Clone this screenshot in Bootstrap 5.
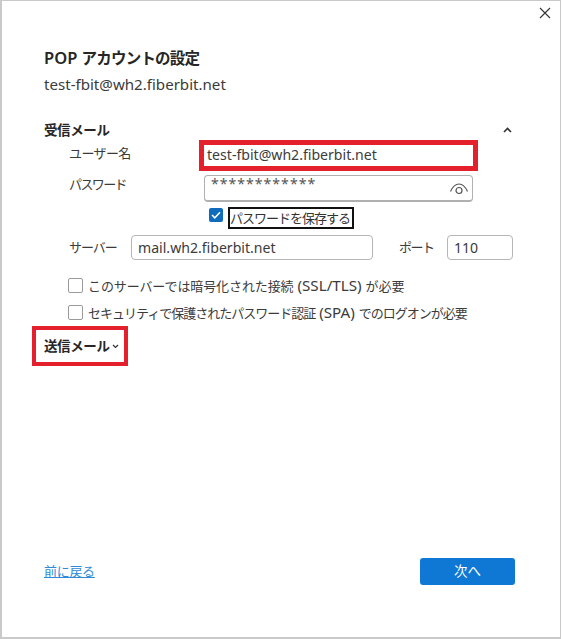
<!DOCTYPE html>
<html lang="ja">
<head>
  <meta charset="UTF-8" />
  <meta name="viewport" content="width=device-width, initial-scale=1" />
  <title>POP アカウントの設定</title>
  <link href="https://cdn.jsdelivr.net/npm/bootstrap@5.3.0/dist/css/bootstrap.min.css" rel="stylesheet" />
  <style>
    html, body { margin: 0; background: #fff; }
    body {
      font-family: "Noto Sans", "Noto Sans CJK JP", sans-serif;
      font-size: 14px;
      color: #3b3b3b;
    }
    .dialog-frame {
      width: 561px;
      height: 639px;
      border: 2px solid #c9c9c9;
      border-right-width: 1px;
      border-top-width: 1px;
      background: #fff;
      padding: 0 0 0 42px;
      display: flex;
      flex-direction: column;
    }
    .close-row { height: 26px; padding-right: 9px; padding-top: 6px; }
    .acct-title { margin: 20px 0 0; height: 22px; line-height: 22px; font-size: 16.5px; font-weight: 600; color: #262626; }
    .acct-title .jp { font-size: 15.5px; letter-spacing: -0.8px; }
    .acct-mail { margin-top: 4px; height: 22px; line-height: 22px; font-size: 15.1px; }
    .section-head { height: 20px; line-height: 20px; font-size: 13.5px; font-weight: 700; color: #262626; letter-spacing: -0.4px; }
    .incoming { margin-top: 25px; padding-right: 48px; }
    .form-line { display: flex; align-items: center; padding-left: 25px; }
    .line-label { font-size: 13px; white-space: nowrap; flex: none; }
    .field-box {
      border: 1px solid #b5b5b5;
      border-radius: 4px;
      background: #fff;
      padding: 0 6px;
      height: 25px;
      line-height: 23px;
      font-size: 14.1px;
      color: #3b3b3b;
      flex: none;
    }
    .user-line { height: 31px; }
    .user-label { width: 130px; letter-spacing: -0.6px; margin-bottom: 4px; }
    .user-field {
      width: 279px;
      height: 31px;
      border: 5px solid #e3202b;
      border-radius: 0;
      line-height: 19px;
      padding: 0 3px;
    }
    .pass-line { margin-top: 4px; height: 27px; }
    .pass-label { width: 135px; letter-spacing: -1.6px; margin-bottom: 7px; }
    .pass-field {
      width: 269px;
      height: 27px;
      border-color: #b0b0b0;
      border-bottom-width: 2px;
      display: flex;
      justify-content: space-between;
      padding-right: 3px;
      color: #555;
      letter-spacing: 1px;
      line-height: 15px;
    }
    .save-line { margin-top: 5px; padding-left: 165px; height: 22px; gap: 5px; align-items: flex-start; }
    .tick-on { width: 14px; height: 14px; margin-top: 1px; background: #0f6cbd; border-radius: 2px; display: flex; align-items: center; justify-content: center; flex: none; }
    .save-text { border: 2px solid #111; height: 22px; line-height: 18px; width: 126px; font-size: 13px; letter-spacing: -1px; white-space: nowrap; color: #333; }
    .server-line { margin-top: 6px; height: 25px; }
    .server-label { width: 62px; letter-spacing: -1px; }
    .server-field { width: 242px; }
    .port-label { margin-left: 26px; width: 48px; letter-spacing: -1.5px; }
    .port-field { width: 66px; }
    .opt-line { gap: 5px; font-size: 15.2px; padding-left: 24px; white-space: nowrap; }
    .opt-first { margin-top: 12px; height: 27px; }
    .opt-second { margin-top: 1px; height: 25px; }
    .opt-line .jp { font-size: 13px; }
    .opt-first .jp { letter-spacing: -0.1px; }
    .opt-first .jp-end { letter-spacing: 0; }
    .opt-second .jp { letter-spacing: -1px; }
    .tick-off { width: 15px; height: 15px; border: 1px solid #9a9a9a; border-radius: 2px; background: #fff; flex: none; }
    .outgoing-box {
      margin-left: -12px;
      margin-top: 1px;
      width: 96px;
      height: 40px;
      border: 4px solid #e3202b;
      padding-left: 8px;
      display: flex;
      align-items: center;
      gap: 2px;
    }
    .dialog-foot { margin-top: auto; margin-bottom: 52px; padding-right: 45px; }
    .back-link { font-size: 13px; letter-spacing: -0.3px; color: #2f8ad8; text-decoration: underline; }
    .next-btn {
      width: 95px;
      height: 27px;
      background: #0f78d4;
      border: none;
      border-radius: 3px;
      color: #fff;
      font-size: 13.5px;
      line-height: 27px;
      padding: 0;
    }
  </style>
</head>
<body>
  <div class="dialog-frame">
    <div class="close-row d-flex justify-content-end">
      <svg width="12" height="12" viewBox="0 0 12 12"><path d="M1 1 11 11M11 1 1 11" stroke="#333" stroke-width="1.1" fill="none"/></svg>
    </div>
    <h1 class="acct-title">POP <span class="jp">アカウントの設定</span></h1>
    <div class="acct-mail">test-fbit@wh2.fiberbit.net</div>

    <div class="incoming d-flex justify-content-between align-items-center section-head">
      <span>受信メール</span>
      <svg width="9" height="6" viewBox="0 0 9 6"><path d="M1 5 4.5 1.5 8 5" stroke="#333" stroke-width="1.6" fill="none"/></svg>
    </div>

    <div class="form-line user-line">
      <span class="line-label user-label">ユーザー名</span>
      <div class="field-box user-field">test-fbit@wh2.fiberbit.net</div>
    </div>
    <div class="form-line pass-line">
      <span class="line-label pass-label">パスワード</span>
      <div class="field-box pass-field">
        <span>************</span>
        <svg class="align-self-center" width="20" height="14" viewBox="0 0 20 14"><path d="M1.5 10.5C4 5 7 3 10 3s6 2 8.5 7.5" stroke="#555" stroke-width="1.2" fill="none"/><circle cx="10" cy="9.5" r="3" stroke="#555" stroke-width="1.2" fill="none"/></svg>
      </div>
    </div>
    <div class="form-line save-line">
      <span class="tick-on">
        <svg width="10" height="8" viewBox="0 0 10 8"><path d="M1 4 3.8 6.8 9 1.2" stroke="#fff" stroke-width="1.5" fill="none"/></svg>
      </span>
      <span class="save-text">パスワードを保存する</span>
    </div>
    <div class="form-line server-line">
      <span class="line-label server-label">サーバー</span>
      <div class="field-box server-field">mail.wh2.fiberbit.net</div>
      <span class="line-label port-label">ポート</span>
      <div class="field-box port-field">110</div>
    </div>
    <div class="form-line opt-line opt-first">
      <span class="tick-off"></span>
      <span><span class="jp">このサーバーでは暗号化された接続</span> (SSL/TLS) <span class="jp jp-end">が必要</span></span>
    </div>
    <div class="form-line opt-line opt-second">
      <span class="tick-off"></span>
      <span><span class="jp">セキュリティで保護されたパスワード認証</span> (SPA) <span class="jp">でのログオンが必要</span></span>
    </div>
    <div class="outgoing-box section-head">
      <span>送信メール</span>
      <svg width="7" height="5" viewBox="0 0 7 5"><path d="M1 1 3.5 3.5 6 1" stroke="#333" stroke-width="1.2" fill="none"/></svg>
    </div>

    <div class="dialog-foot d-flex justify-content-between align-items-center">
      <a href="#" class="back-link">前に戻る</a>
      <button type="button" class="btn next-btn">次へ</button>
    </div>
  </div>
  <script src="https://cdn.jsdelivr.net/npm/bootstrap@5.3.0/dist/js/bootstrap.bundle.min.js"></script>
</body>
</html>
